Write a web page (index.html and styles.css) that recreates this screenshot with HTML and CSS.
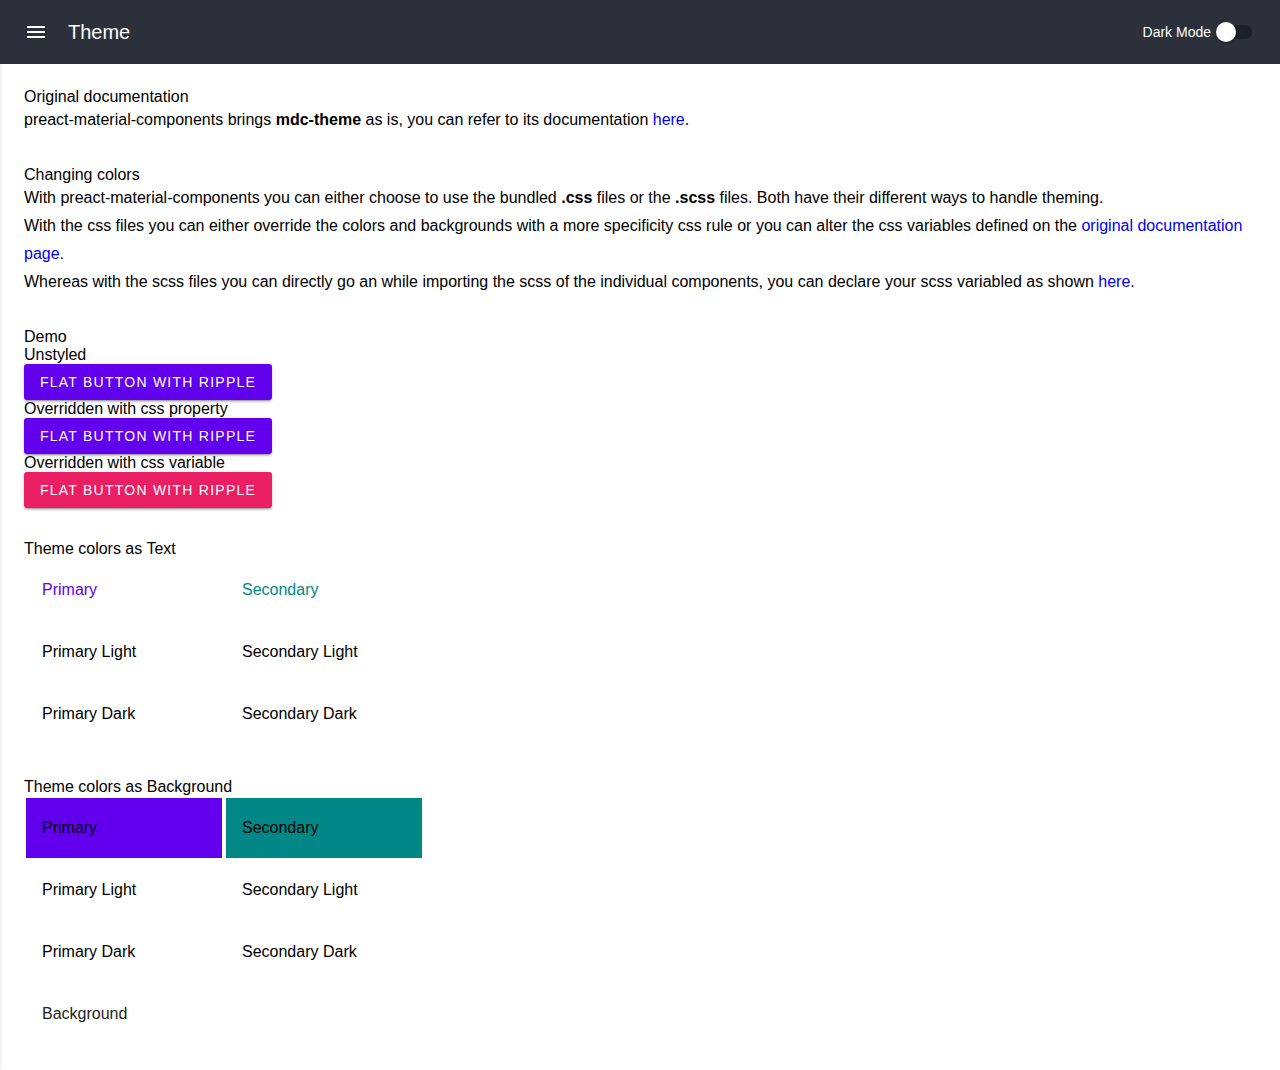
FILE: index.html
```html
<!DOCTYPE html>
<html lang="en">
<head>
<meta charset="utf-8">
<title>Theme</title>
<link rel="stylesheet" href="styles.css">
</head>
<body>
<div class="drawer-edge"></div>
<header class="topbar">
  <div class="topbar-left">
    <span class="menu-icon">
      <svg width="24" height="24" viewBox="0 0 24 24"><path fill="#fff" d="M3 18h18v-2H3v2zm0-5h18v-2H3v2zm0-7v2h18V6H3z"/></svg>
    </span>
    <span class="topbar-title">Theme</span>
  </div>
  <div class="topbar-right">
    <span class="dark-label">Dark Mode</span>
    <span class="switch"><span class="switch-track"></span><span class="switch-thumb"></span></span>
  </div>
</header>
<main class="content">
  <section class="block">
    <div class="heading">Original documentation</div>
    <p class="para">preact-material-components brings <b>mdc-theme</b> as is, you can refer to its documentation <a href="#">here</a>.</p>
  </section>
  <section class="block">
    <div class="heading">Changing colors</div>
    <p class="para">With preact-material-components you can either choose to use the bundled <b>.css</b> files or the <b>.scss</b> files. Both have their different ways to handle theming.</p>
    <p class="para">With the css files you can either override the colors and backgrounds with a more specificity css rule or you can alter the css variables defined on the <a href="#">original documentation page.</a></p>
    <p class="para">Whereas with the scss files you can directly go an while importing the scss of the individual components, you can declare your scss variabled as shown <a href="#">here.</a></p>
  </section>
  <section class="block">
    <div class="heading">Demo</div>
    <div class="label">Unstyled</div>
    <button class="btn">Flat button with ripple</button>
    <div class="label">Overridden with css property</div>
    <button class="btn">Flat button with ripple</button>
    <div class="label">Overridden with css variable</div>
    <button class="btn btn-pink">Flat button with ripple</button>
  </section>
  <section class="block">
    <div class="heading">Theme colors as Text</div>
    <div class="swatches">
      <div class="cell text-primary">Primary</div>
      <div class="cell text-secondary">Secondary</div>
      <div class="cell">Primary Light</div>
      <div class="cell">Secondary Light</div>
      <div class="cell">Primary Dark</div>
      <div class="cell">Secondary Dark</div>
    </div>
  </section>
  <section class="block">
    <div class="heading">Theme colors as Background</div>
    <div class="swatches">
      <div class="cell bg-primary">Primary</div>
      <div class="cell bg-secondary">Secondary</div>
      <div class="cell">Primary Light</div>
      <div class="cell">Secondary Light</div>
      <div class="cell">Primary Dark</div>
      <div class="cell">Secondary Dark</div>
      <div class="cell cell-bg">Background</div>
    </div>
  </section>
</main>
</body>
</html>
```
FILE: styles.css
```css
* { box-sizing: border-box; }
html, body { margin: 0; padding: 0; }
body {
  font-family: "Liberation Sans", Arial, sans-serif;
  font-size: 16px;
  color: #000;
  background: #fff;
}
.drawer-edge {
  position: fixed;
  top: 0;
  left: -20px;
  width: 20px;
  height: 100%;
  box-shadow: 0 0 5px rgba(0,0,0,0.12);
}
.topbar {
  height: 64px;
  background: #2b303b;
  color: #fff;
  display: flex;
  align-items: center;
  justify-content: space-between;
  padding: 0 28px 0 24px;
  position: relative;
  z-index: 2;
}
.topbar-left { display: flex; align-items: center; }
.menu-icon { width: 24px; height: 24px; display: flex; }
.topbar-title { font-size: 20px; margin-left: 20px; }
.topbar-right { display: flex; align-items: center; }
.dark-label { font-size: 14px; margin-right: 5px; }
.switch { position: relative; width: 36px; height: 20px; display: inline-block; }
.switch-track {
  position: absolute; left: 0; top: 3px; width: 36px; height: 14px;
  border-radius: 7px; background: #1b1f27;
}
.switch-thumb {
  position: absolute; left: 0; top: 0; width: 20px; height: 20px;
  border-radius: 50%; background: #fff;
  box-shadow: 0 1px 3px rgba(0,0,0,0.4);
}
.content { padding: 24px 24px 0; }
.block { margin-bottom: 32px; }
.heading, .label { line-height: 18px; }
.para { margin: 0; line-height: 28px; }
a { color: #0000ee; text-decoration: none; }
.btn {
  display: block;
  height: 36px;
  width: 248px;
  padding: 0;
  border: none;
  border-radius: 3px;
  background: #6200ee;
  color: #fff;
  font-family: "Liberation Sans", Arial, sans-serif;
  font-size: 14px;
  letter-spacing: 1.25px;
  white-space: nowrap;
  text-transform: uppercase;
  text-align: center;
  box-shadow: 0 3px 1px -2px rgba(0,0,0,0.2), 0 2px 2px 0 rgba(0,0,0,0.14), 0 1px 5px 0 rgba(0,0,0,0.12);
  cursor: pointer;
}
.btn-pink { background: #e91e63; }
.swatches {
  display: grid;
  grid-template-columns: 196px 196px;
  column-gap: 4px;
  row-gap: 2px;
  padding: 2px;
}
.cell {
  height: 60px;
  display: flex;
  align-items: center;
  padding-left: 16px;
}
.text-primary { color: #6200ee; }
.text-secondary { color: #018786; }
.bg-primary { background: #6200ee; }
.bg-secondary { background: #018786; }
.cell-bg { color: #222; }
```
